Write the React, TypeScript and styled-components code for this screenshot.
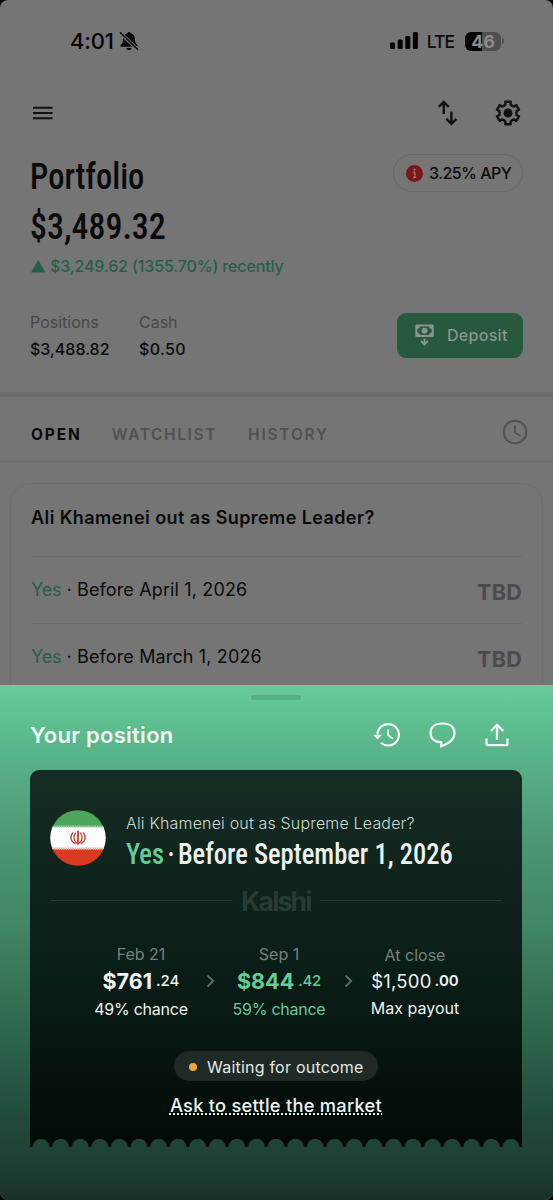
import React from 'react';
import styled, { createGlobalStyle } from 'styled-components';

const Global = createGlobalStyle`
  * { box-sizing: border-box; }
  body { margin: 0; background: #000; font-family: Inter, "Liberation Sans", sans-serif; }
`;

const Screen = styled.div`
  position: relative;
  width: 553px;
  height: 1200px;
  overflow: hidden;
  border-radius: 8px;
  background: #757575;
  color: #0b0b0b;
`;

const Text = styled.span<{ $size: number; $weight?: number; $track?: number; $color?: string; $line?: number }>`
  display: block;
  white-space: pre;
  font-size: ${p => p.$size}px;
  font-weight: ${p => p.$weight ?? 400};
  letter-spacing: ${p => p.$track ?? 0}px;
  color: ${p => p.$color ?? 'inherit'};
  line-height: ${p => (p.$line ? `${p.$line}px` : 'normal')};
`;

const Condensed = styled.span<{ $size: number; $line: number; $scale: number; $color?: string }>`
  display: block;
  width: max-content;
  white-space: pre;
  font-family: Roboto, "Liberation Sans", sans-serif;
  font-size: ${p => p.$size}px;
  font-weight: 500;
  font-stretch: 75%;
  line-height: ${p => p.$line}px;
  color: ${p => p.$color ?? 'inherit'};
  transform: scaleX(${p => p.$scale});
  transform-origin: left center;
`;

const StatusBar = styled.div`
  display: flex;
  align-items: center;
  height: 82px;
  padding: 0 49px 0 70px;
`;
const Silent = styled.svg`margin-left: 5px;`;
const Signal = styled.svg`margin-left: auto; margin-right: 9px;`;
const Battery = styled.div`
  display: flex;
  align-items: center;
  justify-content: center;
  width: 36px;
  height: 19px;
  margin-left: 11px;
  border-radius: 6px;
  background: linear-gradient(90deg, #050505 17px, #505050 17px);
`;
const BatteryTip = styled.div`
  width: 2px;
  height: 6px;
  margin-left: 1px;
  border-radius: 0 2px 2px 0;
  background: #505050;
`;

const NavBar = styled.div`
  display: flex;
  align-items: center;
  height: 61px;
  padding: 0 32px 0 33px;
`;
const NavActions = styled.div`
  display: flex;
  align-items: center;
  gap: 37px;
  margin-left: auto;
`;

const Summary = styled.section`
  height: 249px;
  padding: 8px 30px 0;
`;
const TitleRow = styled.div`
  display: flex;
  justify-content: space-between;
  align-items: flex-start;
`;
const Rate = styled.div`
  display: flex;
  align-items: center;
  gap: 6px;
  width: 130px;
  height: 38px;
  margin-top: 3px;
  padding-left: 12px;
  border: 1px solid #6a6a6a;
  border-radius: 19px;
`;
const Change = styled.div`
  display: flex;
  align-items: center;
  gap: 4px;
  height: 30px;
  color: #265f45;
`;
const Stats = styled.div`
  display: flex;
  align-items: center;
  margin-top: 28px;
`;
const Stat = styled.div<{ $width: number }>`width: ${p => p.$width}px;`;
const Deposit = styled.button`
  display: flex;
  align-items: center;
  gap: 13px;
  width: 126px;
  height: 45px;
  margin: -2px 0 0 auto;
  padding: 0 0 0 18px;
  border: 0;
  border-radius: 9px;
  background: #27593f;
  color: #8b958f;
  font-family: inherit;
`;

const Tabs = styled.nav`
  display: flex;
  align-items: center;
  height: 70px;
  padding: 11px 25px 0 31px;
  border-top: 5px solid #6d6d6d;
  border-bottom: 1px solid #6d6d6d;
`;
const Tab = styled(Text)<{ $gap: number }>`margin-right: ${p => p.$gap}px;`;
const TabClock = styled.svg`margin: -5px 0 0 auto;`;

const Market = styled.section`
  height: 240px;
  margin: 21px 10px 0 10px;
  padding: 0 20px;
  border: 1px solid #6f6f6f;
  border-radius: 21px;
`;
const MarketTitle = styled.div`
  display: flex;
  align-items: center;
  height: 72px;
  padding-bottom: 6px;
`;
const MarketRow = styled.div`
  display: flex;
  align-items: center;
  justify-content: space-between;
  height: 67px;
  border-top: 1px solid #6d6d6d;
`;
const Outcome = styled.div`display: flex; margin-top: -1px;`;
const Pending = styled(Text)`margin-top: 3px;`;

const Sheet = styled.section`
  position: absolute;
  inset: 685px 0 0 0;
  background: linear-gradient(180deg, #66cc9a 0, #5bb88b 55px, #55a982 100px, #4b9672 160px, #438766 235px, #2c624a 360px, #21483a 440px, #1f4334 465px, #18322a 515px);
`;
const Handle = styled.div`
  width: 50px;
  height: 5px;
  margin: 10px 0 0 251px;
  border-radius: 3px;
  background: #57b084;
`;
const SheetHeader = styled.header`
  display: flex;
  align-items: center;
  height: 70px;
  padding: 0 44px 1px 30px;
`;
const SheetActions = styled.div`
  display: flex;
  align-items: center;
  gap: 29px;
  margin-left: auto;
`;

const Ticket = styled.div`
  width: 492px;
  height: 369px;
  margin: 0 0 0 30px;
  padding: 40px 20px 0;
  border-radius: 9px 9px 0 0;
  background: linear-gradient(180deg, #152c23 0, #0f221b 130px, #0b1d17 200px, #06140f 290px, #030b07 369px);
`;
const Perforation = styled.div`
  width: 492px;
  height: 8px;
  margin-left: 30px;
  background: radial-gradient(circle at 50% 8.3px, transparent 8.1px, #030b07 8.7px) center top / 19.58px 8px repeat-x;
`;
const TicketHead = styled.div`
  display: flex;
  gap: 20px;
  height: 75px;
`;
const TicketTitle = styled.div`padding-top: 1px;`;
const Best = styled.span`color: #64cc9a;`;
const Separator = styled.span`word-spacing: -3px;`;
const Brand = styled.div`
  display: flex;
  align-items: center;
  gap: 9px;
  height: 31px;
`;
const Rule = styled.div`
  flex: 1;
  height: 1px;
  background: #2a3a34;
`;
const Timeline = styled.div`
  display: flex;
  align-items: flex-start;
  margin-top: 26px;
  padding-left: 36px;
`;
const Step = styled.div<{ $width: number; $color?: string }>`
  display: flex;
  flex-direction: column;
  align-items: center;
  width: ${p => p.$width}px;
  color: ${p => p.$color ?? '#f0f4f2'};
`;
const Amount = styled.div<{ $gap: number; $lift?: number }>`
  display: flex;
  align-items: center;
  gap: ${p => p.$gap}px;
  height: 29px;
  margin-top: ${p => -(p.$lift ?? 0)}px;
`;
const Arrow = styled.svg`margin-top: 32px;`;
const Status = styled.div`
  display: flex;
  align-items: center;
  gap: 10px;
  width: 204px;
  height: 30px;
  margin: 28px auto 0;
  padding: 1px 0 0 15px;
  border-radius: 15px;
  background: #1f2a26;
`;
const Dot = styled.i`
  width: 8px;
  height: 8px;
  border-radius: 50%;
  background: #f2a23c;
`;
const Settle = styled(Text)`
  width: max-content;
  margin: 12px auto 0;
  text-decoration: underline dotted 1.5px;
  text-underline-offset: 1px;
  text-decoration-skip-ink: none;
`;

const Chevron = ({ width }: { width: number }) => (
  <Arrow width={width} height="14" viewBox={`${-width / 2} -7 ${width} 14`} fill="none" stroke="#5d6a65" strokeWidth="1.9">
    <path d="M-3 -5.5L2.7 0L-3 5.5" />
  </Arrow>
);

const Flag = () => (
  <svg width="56" height="56" viewBox="0 0 56 56">
    <defs><clipPath id="disc"><circle cx="28" cy="28" r="27.8" /></clipPath></defs>
    <g clipPath="url(#disc)">
      <path fill="#4ca65c" d="M0 0h56v17H0z" />
      <path fill="#fff" d="M0 17h56v22H0z" />
      <path fill="#d83a22" d="M0 39h56v17H0z" />
      <path stroke="#a9d2ae" strokeWidth="2.400" strokeDasharray="1.2 .6" d="M0 16.600h56" />
      <path stroke="#e9a196" strokeWidth="2.400" strokeDasharray="1.2 .6" d="M0 38.800h56" />
    </g>
    <g fill="none" stroke="#cf3f2b" strokeWidth="1.300" strokeLinecap="round">
      <path d="M28 21.500v12.500" strokeWidth="1.800" />
      <path d="M25.400 23c-2.200 3.300-1.900 8 1.700 10.300M30.600 23c2.200 3.300 1.900 8-1.700 10.300" />
      <path d="M22.600 23c-3.200 4-1.700 8.800 2.400 10.600M33.400 23c3.200 4 1.700 8.800-2.400 10.600" />
    </g>
  </svg>
);

const gearPath = (() => {
  const pts: string[] = [];
  const teeth = 6;
  for (let i = 0; i < teeth; i++) {
    const base = (i * 360) / teeth - 90;
    [[-25, 8.4], [-17, 8.8], [-13.5, 11.5], [13.5, 11.5], [17, 8.8], [25, 8.4]].forEach(([a, r]) => {
      const t = ((base + a) * Math.PI) / 180;
      pts.push(`${(13 + r * Math.cos(t)).toFixed(2)} ${(13 + r * Math.sin(t)).toFixed(2)}`);
    });
  }
  return `M${pts.join('L')}Z`;
})();

export default function App() {
  return (
    <Screen>
      <Global />
      <StatusBar>
        <Text $size={22} $weight={550} $track={-0.2} $color="#050505">4:01</Text>
        <Silent width="20" height="20" viewBox="0 0 20 20">
          <path fill="#0a0a0a" d="M10 1c-.9 0-1.500.6-1.700 1.300C5.400 3 4 5.200 4 8c0 3.500-.8 4.500-2.300 6-.7.8-.4 1.700.6 1.700h15.400c1 0 1.300-.9.6-1.700C16.800 12.500 16 11.500 16 8c0-2.800-1.400-5-4.300-5.700C11.500 1.600 10.900 1 10 1zM7.300 16.900h5.400c-.3 1.300-1.300 2.100-2.700 2.100s-2.400-.8-2.700-2.100z" />
          <path stroke="#757575" strokeWidth="3.600" d="M.8 1.500l18 17" />
          <path stroke="#0a0a0a" strokeWidth="1.500" strokeLinecap="round" d="M1.500 1.800l17 16.400" />
        </Silent>
        <Signal width="28" height="18" viewBox="0 0 28 18" fill="#050505">
          <rect x="0" y="10.500" width="5" height="6.500" rx="1.300" />
          <rect x="7.700" y="7.500" width="5" height="9.500" rx="1.300" />
          <rect x="15.300" y="4" width="5" height="13" rx="1.300" />
          <rect x="22.900" y="0" width="5" height="17" rx="1.300" />
        </Signal>
        <Text $size={17.5} $weight={500} $track={-1} $color="#0a0a0a">LTE</Text>
        <Battery><Text $size={18} $weight={650} $track={-0.2} $color="#8b8b8b">46</Text></Battery>
        <BatteryTip />
      </StatusBar>

      <NavBar>
        <svg width="20" height="14" viewBox="0 0 20 14" stroke="#111" strokeWidth="2"><path d="M0 1.700h19.500M0 7h19.500M0 12.200h19.500" /></svg>
        <NavActions>
          <svg width="20" height="26" viewBox="0 0 20 26" fill="none" stroke="#111" strokeWidth="2.400">
            <path d="M5.800 14V2.500M.8 7l5-5 5 5M13.400 11.500V23M8.400 18.800l5 5 5-5" />
          </svg>
          <svg width="26" height="26" viewBox="0 0 26 26">
            <path d={gearPath} fill="none" stroke="#111" strokeWidth="2.400" strokeLinejoin="round" />
            <circle cx="13" cy="13" r="4.500" fill="#111" />
          </svg>
        </NavActions>
      </NavBar>

      <Summary>
        <TitleRow>
          <Condensed $size={37.5} $line={50} $scale={0.87}>Portfolio</Condensed>
          <Rate>
            <svg width="17" height="17" viewBox="0 0 17 17">
              <circle cx="8.500" cy="8.500" r="8.500" fill="#7d1717" />
              <path d="M7.200 7.300h1.600v5M7 12.400h3.400" stroke="#8b8080" strokeWidth="1.200" fill="none" />
              <circle cx="8.500" cy="4.700" r="1.100" fill="#8b8080" />
            </svg>
            <Text $size={16} $weight={500} $track={-0.55}>3.25% APY</Text>
          </Rate>
        </TitleRow>
        <Condensed $size={37.5} $line={50} $scale={0.905}>$3,489.32</Condensed>
        <Change>
          <svg width="16" height="13" viewBox="0 0 16 13"><path fill="#265f45" d="M8.300 0l7.200 12.500H1z" /></svg>
          <Text $size={16} $weight={500} $track={-0.13}>$3,249.62 (1355.70%) recently</Text>
        </Change>
        <Stats>
          <Stat $width={109}>
            <Text $size={16} $line={27} $weight={380} $color="#474747">Positions</Text>
            <Text $size={16} $line={27} $weight={500}>$3,488.82</Text>
          </Stat>
          <Stat $width={60}>
            <Text $size={16} $line={27} $weight={380} $color="#474747">Cash</Text>
            <Text $size={16} $line={27} $weight={500} $track={0.35}>$0.50</Text>
          </Stat>
          <Deposit>
            <svg width="19" height="22" viewBox="0 0 19 22">
              <path fill="#8b958f" fillRule="evenodd" d="M1.500.5h16a1.200 1.200 0 011.200 1.200v10.100a1.200 1.200 0 01-1.200 1.200h-16A1.200 1.200 0 01.3 11.800V1.700A1.200 1.200 0 011.500.5zM5 2.500C4.600 4 3.700 4.800 2.300 5v3.500C3.700 8.800 4.600 9.600 5 11h9c.4-1.400 1.300-2.200 2.700-2.500V5C15.300 4.800 14.400 4 14 2.500z" />
              <circle cx="9.500" cy="6.800" r="3" fill="#8b958f" />
              <path d="M9.500 14.500v5.500M6 17l3.500 3.500L13 17" fill="none" stroke="#8b958f" strokeWidth="1.900" />
            </svg>
            <Text $size={16} $weight={500} $track={0.3}>Deposit</Text>
          </Deposit>
        </Stats>
      </Summary>

      <Tabs>
        <Tab $size={15.5} $weight={700} $track={1.9} $gap={30}>OPEN</Tab>
        <Tab $size={15.5} $weight={600} $track={1.6} $gap={31} $color="#515151">WATCHLIST</Tab>
        <Tab $size={15.5} $weight={600} $track={1.8} $gap={0} $color="#515151">HISTORY</Tab>
        <TabClock width="26" height="26" viewBox="0 0 26 26" fill="none" stroke="#515151">
          <circle cx="13" cy="13" r="11.300" strokeWidth="1.900" />
          <path d="M13 6.500v7l5.500 3.700" strokeWidth="1.600" />
        </TabClock>
      </Tabs>

      <Market>
        <MarketTitle>
          <Text $size={18} $weight={600} $track={0.41}>Ali Khamenei out as Supreme Leader?</Text>
        </MarketTitle>
        {['April 1', 'March 1'].map(day => (
          <MarketRow key={day}>
            <Outcome>
              <Text $size={18} $weight={370} $track={-0.2} $color="#265f45">Yes</Text>
              <Text $size={18} $weight={380} $track={0.14}>{` · Before ${day}, 2026`}</Text>
            </Outcome>
            <Pending $size={21.5} $weight={650} $track={0.3} $color="#4b4b4b">TBD</Pending>
          </MarketRow>
        ))}
      </Market>

      <Sheet>
        <Handle />
        <SheetHeader>
          <Text $size={22} $weight={600} $track={0.27} $color="#effbf5">Your position</Text>
          <SheetActions>
            <svg width="27" height="24" viewBox="0 0 27 24" fill="none" stroke="#effbf5">
              <path d="M4.500 11.500a10.700 10.700 0 113.500 8.200" strokeWidth="2.200" />
              <path d="M0 11.800h9.200L4.600 16.500z" fill="#effbf5" stroke="none" />
              <path d="M15.200 6.500v6l5 3.300" strokeWidth="1.800" />
            </svg>
            <svg width="27" height="26" viewBox="0 0 27 26" fill="none" stroke="#effbf5" strokeWidth="2.200">
              <path d="M12.200 20.200C5.500 20 1.500 16.500 1.500 11 1.500 5 6 1.500 13.500 1.500S25.500 5 25.500 11c0 6.500-5.500 10.500-13.300 13.200z" />
            </svg>
            <svg width="24" height="24" viewBox="0 0 24 24" fill="none" stroke="#effbf5" strokeWidth="2.300">
              <path d="M12 17V2M5.800 8L12 1.800 18.200 8M1.500 15.500v5a1.700 1.700 0 001.700 1.700h17.600a1.700 1.700 0 001.700-1.700v-5" />
            </svg>
          </SheetActions>
        </SheetHeader>

        <Ticket>
          <TicketHead>
            <Flag />
            <TicketTitle>
              <Text $size={16} $weight={350} $track={0.17} $line={25} $color="#d0d8d4">Ali Khamenei out as Supreme Leader?</Text>
              <Condensed $size={29.5} $line={37} $scale={0.9} $color="#edf2f0">
                <Best>Yes</Best><Separator> · </Separator>Before September 1, 2026
              </Condensed>
            </TicketTitle>
          </TicketHead>
          <Brand>
            <Rule />
            <Text $size={26.5} $weight={700} $track={-1.8} $color="#2a3a34">Kalshi</Text>
            <Rule />
          </Brand>
          <Timeline>
            <Step $width={110}>
              <Text $size={16} $weight={370} $line={24} $color="#76827d">Feb 21</Text>
              <Amount $gap={4}>
                <Text $size={21.5} $weight={700} $track={0}>$761</Text>
                <Text $size={15} $weight={500} $track={0}>.24</Text>
              </Amount>
              <Text $size={16} $weight={370} $track={-0.25} $line={28}>49% chance</Text>
            </Step>
            <Chevron width={29} />
            <Step $width={108} $color="#64cc9a">
              <Text $size={16} $weight={370} $line={24} $color="#76827d">Sep 1</Text>
              <Amount $gap={4}>
                <Text $size={21.5} $weight={700} $track={0}>$844</Text>
                <Text $size={15} $weight={500} $track={-0.3}>.42</Text>
              </Amount>
              <Text $size={16} $weight={370} $track={-0.25} $line={28}>59% chance</Text>
            </Step>
            <Chevron width={31} />
            <Step $width={102}>
              <Text $size={16} $weight={370} $line={26} $color="#76827d">At close</Text>
              <Amount $gap={3} $lift={2}>
                <Text $size={18.5} $weight={380} $track={0.2}>$1,500</Text>
                <Text $size={15} $weight={600} $track={0}>.00</Text>
              </Amount>
              <Text $size={16} $weight={370} $line={27}>Max payout</Text>
            </Step>
          </Timeline>
          <Status>
            <Dot />
            <Text $size={16} $weight={380} $track={0.22} $color="#e3e8e6">Waiting for outcome</Text>
          </Status>
          <Settle $size={18.3} $weight={480} $track={0.25} $line={24} $color="#f0f4f2">Ask to settle the market</Settle>
        </Ticket>
        <Perforation />
      </Sheet>
    </Screen>
  );
}
